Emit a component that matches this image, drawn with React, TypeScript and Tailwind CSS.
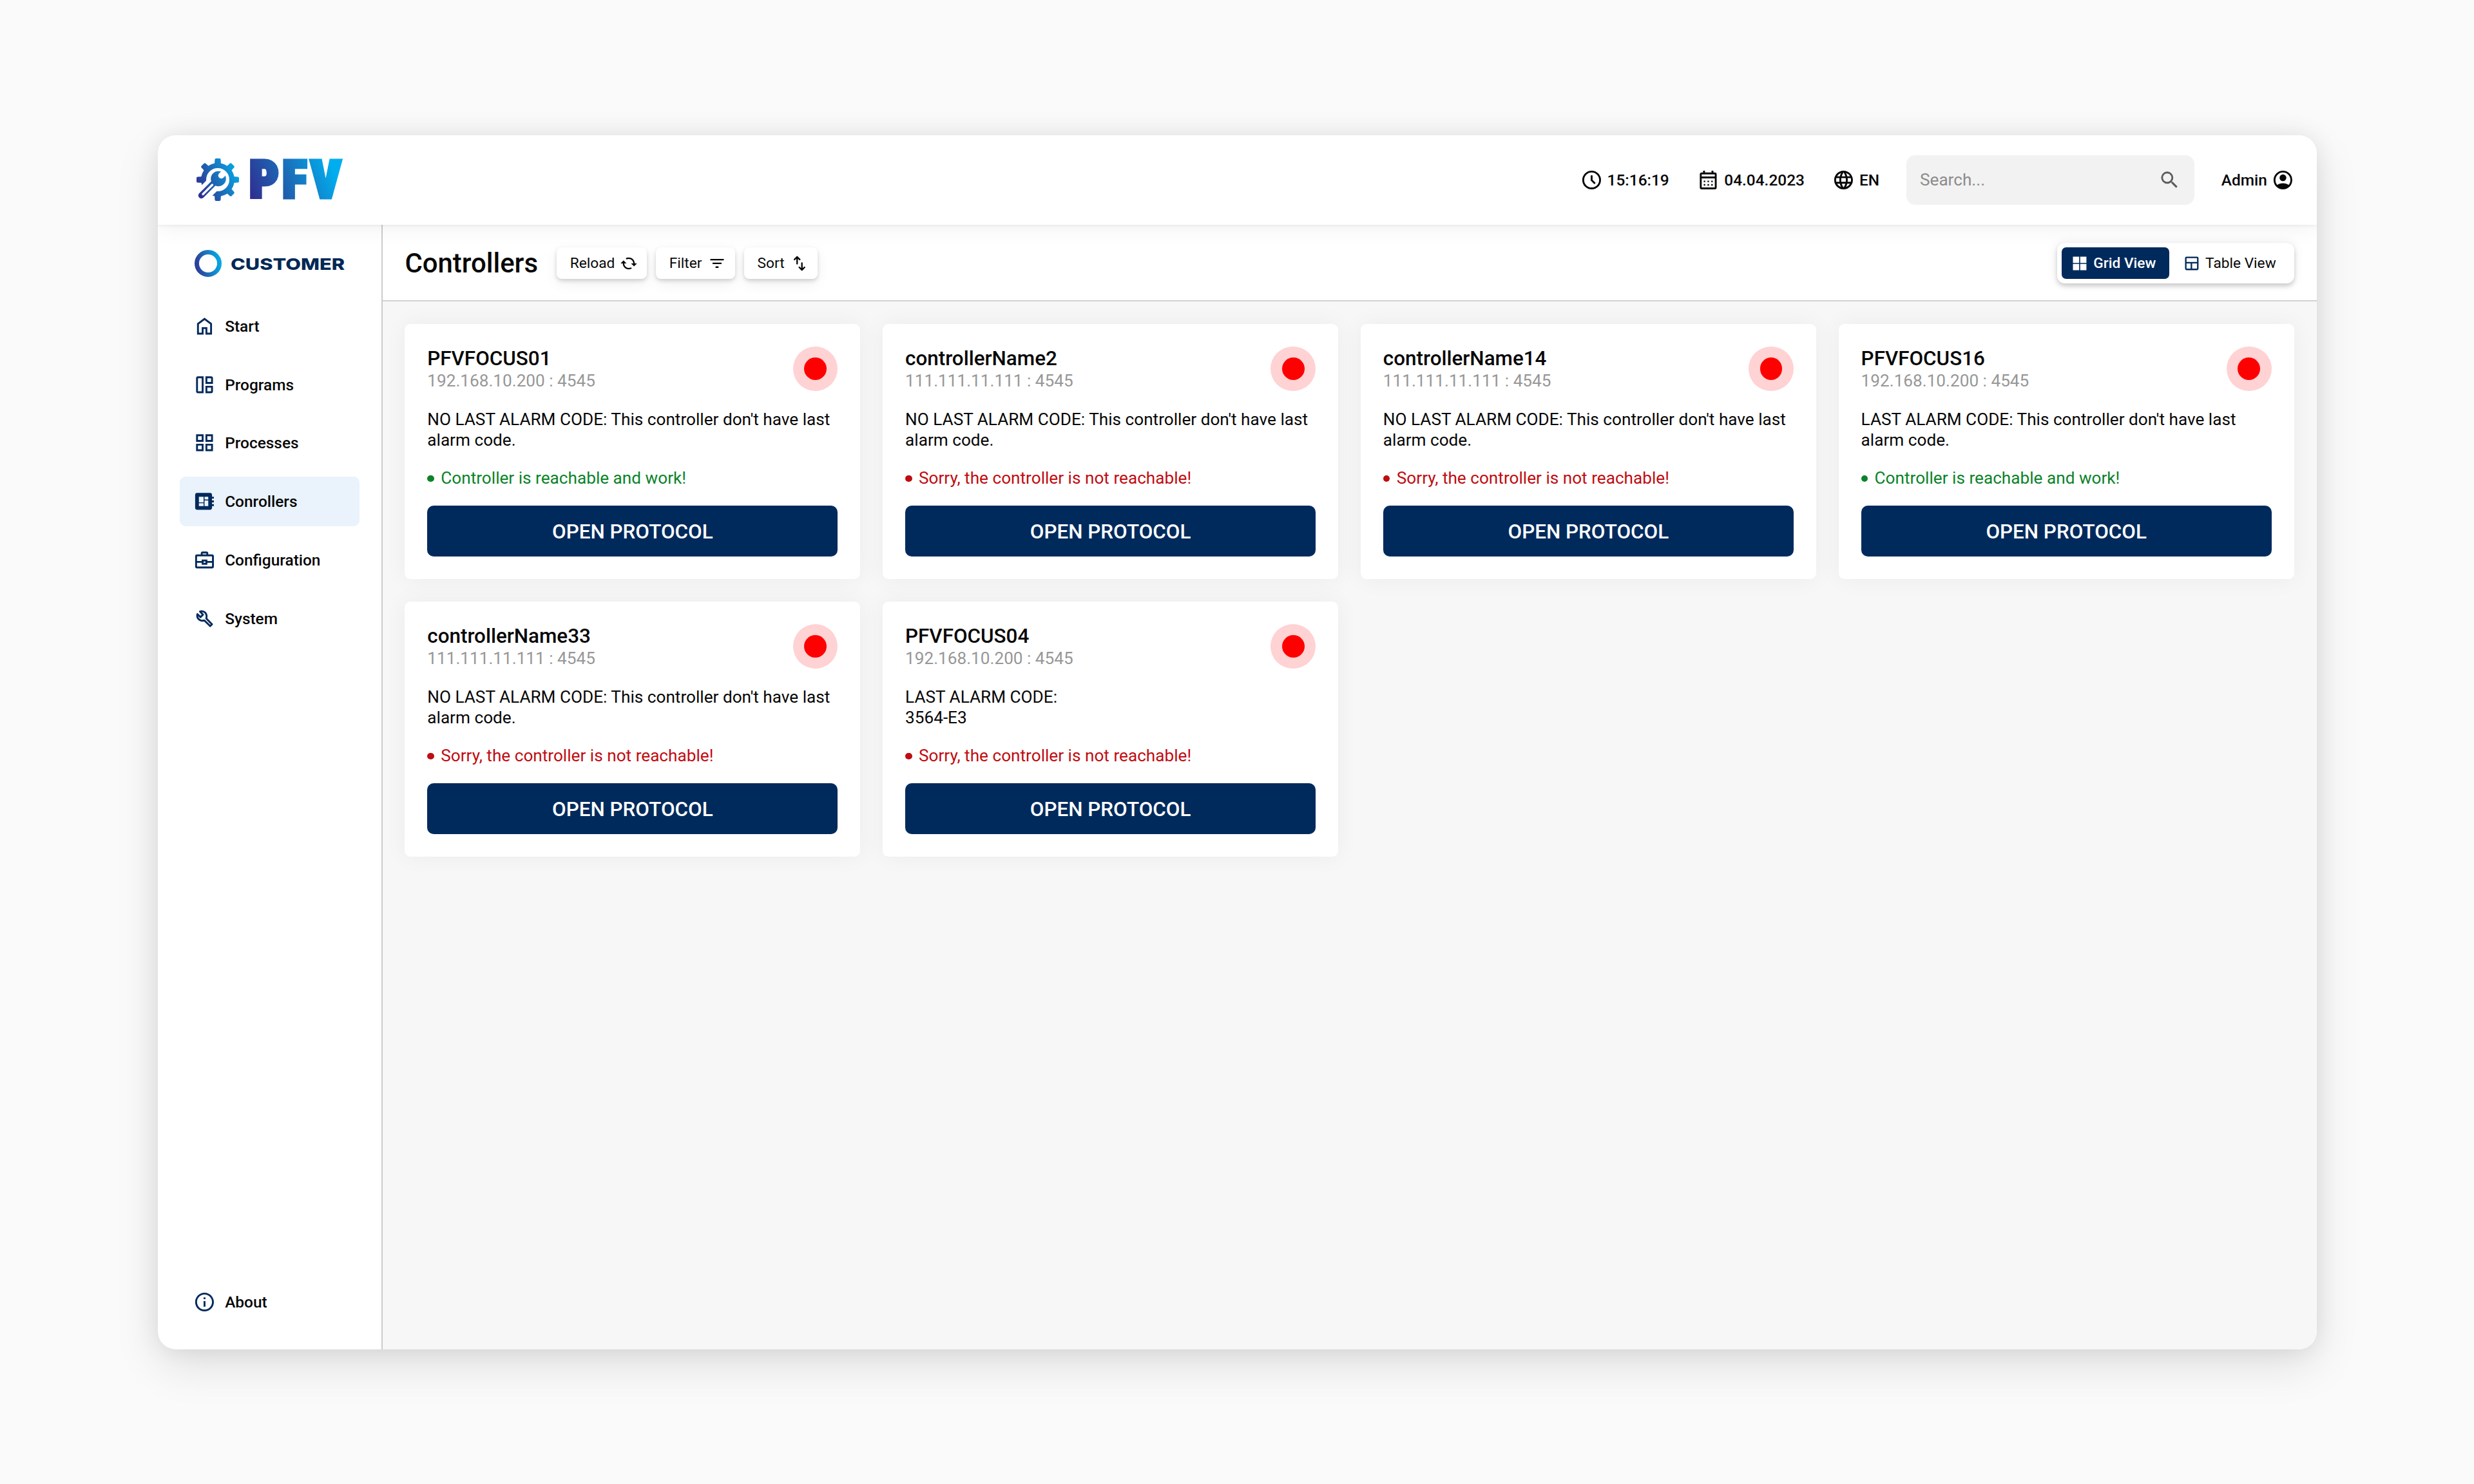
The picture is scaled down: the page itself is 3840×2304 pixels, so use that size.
import React from "react";
import {
  MdCached,
  MdFilterList,
  MdInfoOutline,
  MdLanguage,
  MdOutlineGridView,
  MdSearch,
} from "react-icons/md";

type IconProps = { className?: string };

function ClockIcon({ className }: IconProps) {
  return (
    <svg viewBox="0 0 24 24" fill="none" stroke="currentColor" strokeWidth="2" className={className}>
      <circle cx="12" cy="12" r="9" />
      <path d="M12 7v5.200l3.600 3.600" />
    </svg>
  );
}

function CalendarIcon({ className }: IconProps) {
  return (
    <svg viewBox="0 0 24 24" fill="none" stroke="currentColor" strokeWidth="2" className={className}>
      <rect x="4" y="5" width="16" height="16" rx="1" />
      <path d="M4 9.300h16M7.500 2v3M16.500 2v3" />
      <path d="M7.200 13.500h1.600M11.200 13.500h1.600M15.200 13.500h1.600M7.200 17.200h1.600M11.200 17.200h1.600M15.200 17.200h1.600" strokeWidth="1.600" />
    </svg>
  );
}

function HomeIcon({ className }: IconProps) {
  return (
    <svg viewBox="0 0 24 24" fill="currentColor" className={className}>
      <path d="M6 19h3v-6h6v6h3v-9l-6-4.5L6 10v9Zm-2 2V9l8-6 8 6v12h-7v-6h-2v6H4Z" />
    </svg>
  );
}

function ProgramsIcon({ className }: IconProps) {
  return (
    <svg viewBox="0 0 24 24" fill="none" stroke="currentColor" strokeWidth="2" className={className}>
      <path d="M10 4v16H5a1 1 0 0 1-1-1V5a1 1 0 0 1 1-1z" />
      <path d="M14 4h5a1 1 0 0 1 1 1v5h-6z" />
      <path d="M14 14h6v5a1 1 0 0 1-1 1h-5z" />
    </svg>
  );
}

function BoardIcon({ className }: IconProps) {
  return (
    <svg viewBox="0 0 24 24" fill="currentColor" fillRule="evenodd" className={className}>
      <path d="M22 9V7h-2V5c0-1.1-.9-2-2-2H4c-1.100 0-2 .9-2 2v14c0 1.100.9 2 2 2h14c1.100 0 2-.9 2-2v-2h2v-2h-2v-2h2v-2h-2V9h2zM6 7h5v6H6V7zm6 0h4v3h-4V7zM6 14h5v3H6v-3zm6-3h4v6h-4v-6z" />
    </svg>
  );
}

function CaseIcon({ className }: IconProps) {
  return (
    <svg viewBox="0 0 24 24" fill="none" stroke="currentColor" strokeWidth="2" className={className}>
      <rect x="3" y="7" width="18" height="13" rx="1" />
      <path d="M9 7V5a1 1 0 0 1 1-1h4a1 1 0 0 1 1 1v2M3 14h7M14 14h7" />
      <path d="M10 12.500h4v3.500h-4z" />
    </svg>
  );
}

function WrenchIcon({ className }: IconProps) {
  return (
    <svg viewBox="0 0 24 24" fill="none" stroke="currentColor" strokeWidth="2" strokeLinejoin="round" className={className}>
      <path d="M4.400 7.200 7.700 10.400 10.400 7.700 7.200 4.400C10.500 3.200 14.400 5.600 14.200 9.800c0 .8-.1 1.400-.3 2L20 18l-2 2-6.200-6.100C8.400 15.200 3 12.600 4.400 7.200z" />
    </svg>
  );
}

function AccountIcon({ className }: IconProps) {
  return (
    <svg viewBox="0 0 24 24" className={className}>
      <circle cx="12" cy="12" r="9" fill="none" stroke="currentColor" strokeWidth="2" />
      <circle cx="12" cy="9.6" r="3.6" fill="currentColor" />
      <path d="M4.600 18.200C6.600 16.400 9.200 15.500 12 15.500s5.400.9 7.400 2.700A9.500 9.500 0 0 1 12 21.500a9.500 9.500 0 0 1-7.400-3.300z" fill="currentColor" />
    </svg>
  );
}

function SortIcon({ className }: IconProps) {
  return (
    <svg viewBox="0 0 24 24" fill="none" stroke="currentColor" strokeWidth="2" strokeLinecap="round" strokeLinejoin="round" className={className}>
      <path d="M8.800 12.500V3.500M5.300 6.800 8.800 3.300l3.500 3.500M15.200 11.500v9M11.700 17.200l3.500 3.500 3.500-3.500" />
    </svg>
  );
}

function GridIcon({ className }: IconProps) {
  return (
    <svg viewBox="0 0 24 24" fill="currentColor" className={className}>
      <path d="M3 3h8.300v8.300H3zM12.700 3H21v8.300h-8.300zM3 12.700h8.300V21H3zM12.700 12.700H21V21h-8.300z" />
    </svg>
  );
}

function TableIcon({ className }: IconProps) {
  return (
    <svg viewBox="0 0 24 24" fill="none" stroke="currentColor" strokeWidth="2" className={className}>
      <rect x="4" y="4" width="16" height="16" rx="1" />
      <path d="M4 11h16M11.500 11v9" />
    </svg>
  );
}

function Logo() {
  const teeth = [0, 45, 90, 135, 180, 270, 315];
  return (
    <svg viewBox="0 0 230 70" className="h-[70px] w-[230px] overflow-visible" aria-label="PFV">
      <defs>
        <linearGradient id="gearFill" gradientUnits="userSpaceOnUse" x1="4" y1="50" x2="66" y2="22">
          <stop offset="0" stopColor="#2e3192" />
          <stop offset="0.5" stopColor="#1b6fba" />
          <stop offset="1" stopColor="#06a6e4" />
        </linearGradient>
        <linearGradient id="wordFill" gradientUnits="userSpaceOnUse" x1="92" y1="66" x2="212" y2="12">
          <stop offset="0" stopColor="#2e3192" />
          <stop offset="0.5" stopColor="#1b6fba" />
          <stop offset="1" stopColor="#00aeef" />
        </linearGradient>
        <mask id="gearCut" maskUnits="userSpaceOnUse" x="0" y="0" width="70" height="70">
          <rect width="70" height="70" fill="#fff" />
          <circle cx="35" cy="35" r="18" fill="#000" />
          <path d="M35 35 10 60" stroke="#000" strokeWidth="23" />
        </mask>
        <mask id="wrenchCut" maskUnits="userSpaceOnUse" x="0" y="0" width="70" height="70">
          <rect width="70" height="70" fill="#fff" />
          <path d="M40.500 28.500 50 19" stroke="#000" strokeWidth="9.500" strokeLinecap="round" />
          <path d="M12 57.500 26.500 43" stroke="#000" strokeWidth="3.200" strokeLinecap="round" />
        </mask>
      </defs>
      <g mask="url(#gearCut)">
        <circle cx="35" cy="35" r="26" fill="url(#gearFill)" />
        <g fill="url(#gearFill)" stroke="url(#gearFill)">
          {teeth.map((a) => {
            const r = (a * Math.PI) / 180;
            const s = Math.sin(r);
            const c = Math.cos(r);
            const pt = (u: number, v: number) => `${35 + u * c + v * s} ${35 + u * s - v * c}`;
            return (
              <path
                key={a}
                d={`M${pt(-3, 22)}L${pt(-2.6, 31)}L${pt(2.6, 31)}L${pt(3, 22)}Z`}
                strokeWidth="4"
                strokeLinejoin="round"
              />
            );
          })}
        </g>
      </g>
      <g mask="url(#wrenchCut)">
        <circle cx="36" cy="33.500" r="11.800" fill="url(#gearFill)" />
        <path d="M33 36 9.500 59.500" stroke="url(#gearFill)" strokeWidth="9.500" strokeLinecap="round" />
      </g>
      <text
        x="83.8 135.1 179"
        y="63.400"
        className="font-[Roboto,sans-serif] text-[80.700px] font-black font-stretch-condensed"
        fill="url(#wordFill)"
        stroke="url(#wordFill)"
        strokeWidth="5"
      >
        PFV
      </text>
    </svg>
  );
}

function CustomerLogo() {
  return (
    <svg viewBox="0 0 240 44" className="h-[44px] w-[240px]" aria-label="Customer">
      <defs>
        <linearGradient id="ringFill" x1="0" y1="0.6" x2="1" y2="0.4">
          <stop offset="0" stopColor="#2b3f9c" />
          <stop offset="0.5" stopColor="#1b75bc" />
          <stop offset="1" stopColor="#06a6e4" />
        </linearGradient>
      </defs>
      <circle cx="22" cy="22" r="17.500" fill="none" stroke="url(#ringFill)" strokeWidth="7" />
      <text
        x="57"
        y="31.500"
        fontFamily="Inter, sans-serif"
        fontWeight="800"
        fontSize="25"
        fill="#002855"
        textLength="177"
        lengthAdjust="spacingAndGlyphs"
      >
        CUSTOMER
      </text>
    </svg>
  );
}

function NavItem({ icon, label, active }: { icon: React.ReactNode; label: string; active?: boolean }) {
  return (
    <a
      className={
        active
          ? "flex h-11 items-center gap-2 rounded-[9px] bg-[#eaf3fb] px-3 text-[24.430px] font-medium"
          : "flex h-11 items-center gap-2 rounded-[9px] px-3 text-[24.430px] font-medium"
      }
    >
      <span className="text-[#002a5c]">{icon}</span>
      <span className="pt-[2px]">{label}</span>
    </a>
  );
}

function ToolButton({ label, icon, width }: { label: string; icon: React.ReactNode; width: string }) {
  return (
    <button
      className={`flex h-7 items-center justify-between rounded-[8px] bg-white pl-3 pr-2 text-[22.690px] shadow-[0_3px_6px_rgba(0,0,0,0.16),0_8px_22px_rgba(0,0,0,0.06)] ${width}`}
    >
      <span className="pt-px">{label}</span>
      {icon}
    </button>
  );
}

type Controller = { name: string; ip: string; alarm: React.ReactNode; ok: boolean };

function ControllerCard({ name, ip, alarm, ok }: Controller) {
  return (
    <article className="flex flex-col gap-4 rounded-[9px] bg-white p-5 text-[26.180px] leading-[31.400px] shadow-[0_0_36px_rgba(0,0,0,0.05)]">
      <div className="flex h-10 items-center justify-between">
        <div className="pt-px">
          <h2 className="text-[31.400px] font-medium leading-[36.800px]">{name}</h2>
          <p className="leading-[30.700px] text-[#979797]">{ip}</p>
        </div>
        <span className="flex size-10 items-center justify-center rounded-full bg-[#ffd2d4]">
          <span className="size-5 rounded-full bg-[#ff0000]" />
        </span>
      </div>
      <p className="translate-y-px">{alarm}</p>
      {ok ? (
        <p className="flex translate-y-px items-center gap-[10.500px] text-[#0b8329]">
          <span className="size-1.5 rounded-full bg-[#0b8329]" />
          Controller is reachable and work!
        </p>
      ) : (
        <p className="flex translate-y-px items-center gap-[10.500px] text-[#c00c11]">
          <span className="size-1.5 rounded-full bg-[#c00c11]" />
          Sorry, the controller is not reachable!
        </p>
      )}
      <button className="h-[78.500px] rounded-[10px] bg-[#002a5c] pt-[2px] text-[31.400px] font-medium text-white">
        OPEN PROTOCOL
      </button>
    </article>
  );
}

const NO_ALARM = "NO LAST ALARM CODE: This controller don't have last alarm code.";

const controllers: Controller[] = [
  { name: "PFVFOCUS01", ip: "192.168.10.200 : 4545", alarm: NO_ALARM, ok: true },
  { name: "controllerName2", ip: "111.111.11.111 : 4545", alarm: NO_ALARM, ok: false },
  { name: "controllerName14", ip: "111.111.11.111 : 4545", alarm: NO_ALARM, ok: false },
  {
    name: "PFVFOCUS16",
    ip: "192.168.10.200 : 4545",
    alarm: "LAST ALARM CODE: This controller don't have last alarm code.",
    ok: true,
  },
  { name: "controllerName33", ip: "111.111.11.111 : 4545", alarm: NO_ALARM, ok: false },
  {
    name: "PFVFOCUS04",
    ip: "192.168.10.200 : 4545",
    alarm: (
      <>
        LAST ALARM CODE:
        <br />
        3564-E3
      </>
    ),
    ok: false,
  },
];

export default function App() {
  return (
    <div className="flex h-[2304px] w-[3840px] items-start bg-[#fafafa] pl-[244.500px] pt-[209.600px] font-[Roboto,sans-serif] text-[#070707] [--spacing:6.9812px]">
      <div className="flex h-[1885px] w-[3351px] flex-col overflow-hidden rounded-[28px] bg-white shadow-[0_0_36px_rgba(0,0,0,0.08),0_24px_70px_rgba(0,0,0,0.11)]">
        <header className="z-10 flex h-20 shrink-0 items-center justify-between bg-white pl-[58.500px] pr-5 text-[24.430px] font-medium shadow-[0_2px_4px_rgba(0,0,0,0.05),0_0_36px_rgba(0,0,0,0.08)]">
          <Logo />
          <div className="flex items-center gap-6">
            <div className="flex items-center gap-1">
              <ClockIcon className="size-5" />
              <span className="w-[98px] pt-px">15:16:19</span>
            </div>
            <div className="flex items-center gap-1">
              <CalendarIcon className="size-5" />
              <span className="w-[126px] pt-px">04.04.2023</span>
            </div>
            <div className="flex items-center gap-1">
              <MdLanguage className="size-5" />
              <span className="pt-px">EN</span>
            </div>
            <div className="flex h-11 w-64 items-center justify-between rounded-[14px] bg-[#f2f2f2] px-3 text-[26.180px] font-normal text-[#8c8c8c]">
              <span className="pt-px">Search...</span>
              <MdSearch className="size-5 text-[#5c5c5c]" />
            </div>
            <div className="flex items-center gap-1">
              <span className="pt-px">Admin</span>
              <AccountIcon className="size-5" />
            </div>
          </div>
        </header>
        <div className="flex min-h-0 flex-1">
          <aside className="flex w-[349px] shrink-0 flex-col border-r-2 border-[#cccccc] pb-5 pl-5 pr-[33.500px]">
            <div className="flex h-[118.700px] items-center pl-[22px]">
              <CustomerLogo />
            </div>
            <nav className="flex flex-1 flex-col gap-2">
              <NavItem icon={<HomeIcon className="size-5" />} label="Start" />
              <NavItem icon={<ProgramsIcon className="size-5" />} label="Programs" />
              <NavItem icon={<MdOutlineGridView className="size-5" />} label="Processes" />
              <NavItem icon={<BoardIcon className="size-5" />} label="Conrollers" active />
              <NavItem icon={<CaseIcon className="size-5" />} label="Configuration" />
              <NavItem icon={<WrenchIcon className="size-5" />} label="System" />
            </nav>
            <NavItem icon={<MdInfoOutline className="size-5" />} label="About" />
          </aside>
          <main className="flex min-w-0 flex-1 flex-col bg-[#f7f7f7]">
            <div className="flex h-[118.700px] items-center justify-between border-b-2 border-[#d2d2d2] bg-white px-5 pt-[2px]">
              <div className="flex items-center gap-2">
                <h1 className="mr-4 w-[207px] whitespace-nowrap pt-px text-[41.900px] font-medium">Controllers</h1>
                <ToolButton width="-ml-[13.500px] w-[140px]" label="Reload" icon={<MdCached className="size-4 -scale-x-100" />} />
                <ToolButton width="w-[123px]" label="Filter" icon={<MdFilterList className="size-4" />} />
                <ToolButton width="w-[114px]" label="Sort" icon={<SortIcon className="size-4" />} />
              </div>
              <div className="flex h-9 items-center gap-1 rounded-[12px] bg-white p-1 text-[22.690px] shadow-[0_4px_7px_rgba(0,0,0,0.18),0_0_18px_rgba(0,0,0,0.08)]">
                <button className="flex h-7 items-center gap-1 rounded-[7px] bg-[#002a5c] pl-2 pr-3 font-medium text-white">
                  <GridIcon className="size-4" />
                  <span className="pt-px">Grid View</span>
                </button>
                <button className="flex h-7 items-center gap-1 pl-2 pr-3">
                  <TableIcon className="size-4 text-[#002a5c]" />
                  <span className="pt-px">Table View</span>
                </button>
              </div>
            </div>
            <div className="grid grid-cols-4 gap-5 p-5">
              {controllers.map((c) => (
                <ControllerCard key={c.name} {...c} />
              ))}
            </div>
          </main>
        </div>
      </div>
    </div>
  );
}
